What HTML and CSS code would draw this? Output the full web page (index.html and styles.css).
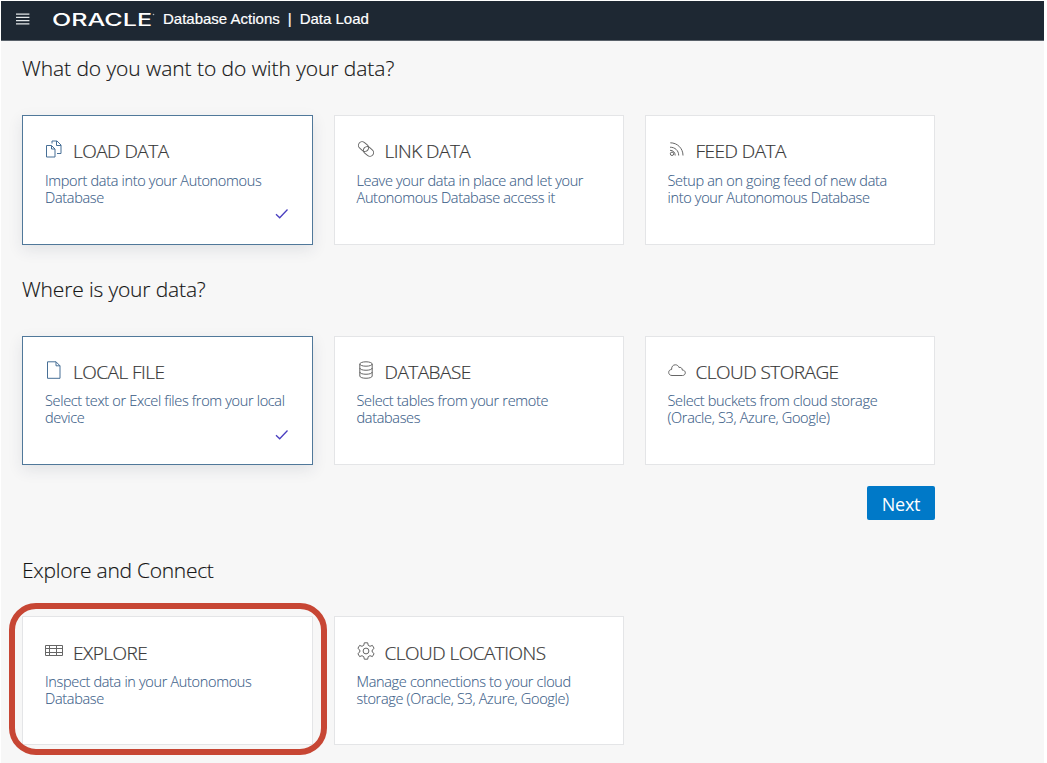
FILE: index.html
```html
<!DOCTYPE html>
<html lang="en">
<head>
<meta charset="utf-8">
<title>Database Actions | Data Load</title>
<link rel="stylesheet" href="styles.css">
</head>
<body>
<div class="page">
  <header class="topbar">
    <svg class="menu" width="14" height="12" viewBox="0 0 14 12"><path d="M0 1.200h13.400M0 4.400h13.400M0 7.600h13.400M0 10.800h13.400" stroke="#e4e8ea" stroke-width="1.300"/></svg>
    <svg class="logo" width="106" height="26" viewBox="0 0 106 26"><text class="logo-text" x="-1" y="20" textLength="100" lengthAdjust="spacingAndGlyphs">ORACLE</text><circle cx="100.500" cy="8.500" r=".8" fill="#aab2b8"/></svg>
    <span class="product">Database Actions</span><span class="bar">|</span><span class="section">Data Load</span>
  </header>
  <main class="content">
    <h2 class="question q1">What do you want to do with your data?</h2>
    <div class="cards first">
      <article class="card selected">
        <div class="head"><svg class="icon blue" viewBox="0 0 18 18"><path d="M1.500 5.500h5l3.500 3.500v8h-8.500zM6.500 5.500v3.500h3.500M7 3.500v-2.500h5l4 4v8.500h-4M11.500 1v4.500h4.500"/></svg><h3>LOAD DATA</h3></div>
        <p>Import data into your Autonomous<br>Database</p>
        <svg class="check" viewBox="0 0 14 12"><path d="M1 6.200l3.700 3.600L12.500 1.500"/></svg>
      </article>
      <article class="card">
        <div class="head"><svg class="icon" viewBox="0 0 18 18"><g transform="rotate(40 9 9)"><rect x="0" y="5" width="11" height="7.400" rx="3.700"/><rect x="7" y="5.600" width="11" height="7.400" rx="3.700"/></g></svg><h3>LINK DATA</h3></div>
        <p>Leave your data in place and let your<br>Autonomous Database access it</p>
      </article>
      <article class="card">
        <div class="head"><svg class="icon" viewBox="0 0 18 18"><circle cx="4" cy="13.800" r="1.700"/><path d="M2 7.200c5 0 8.700 3.300 8.700 8.300M2.300 2.800c7 0 12.700 5.500 12.700 12.700M2 10.300c3 0 5.200 2 5.200 5.200"/></svg><h3>FEED DATA</h3></div>
        <p>Setup an on going feed of new data<br>into your Autonomous Database</p>
      </article>
    </div>
    <h2 class="question q2">Where is your data?</h2>
    <div class="cards">
      <article class="card selected">
        <div class="head"><svg class="icon blue" viewBox="0 0 18 18"><path d="M2.500.8h8.500l4 4v12.500h-12.500zM11 .8v4h4"/></svg><h3>LOCAL FILE</h3></div>
        <p>Select text or Excel files from your local<br>device</p>
        <svg class="check" viewBox="0 0 14 12"><path d="M1 6.200l3.700 3.600L12.500 1.500"/></svg>
      </article>
      <article class="card">
        <div class="head"><svg class="icon" viewBox="0 0 18 18"><ellipse cx="9" cy="3" rx="6.200" ry="2.200"/><path d="M2.800 3v12c0 3 12.400 3 12.400 0V3M2.800 7c0 3 12.400 3 12.400 0M2.800 11c0 3 12.400 3 12.400 0"/></svg><h3>DATABASE</h3></div>
        <p>Select tables from your remote<br>databases</p>
      </article>
      <article class="card">
        <div class="head"><svg class="icon" viewBox="0 0 18 18"><path d="M4 14.500C1.800 14.500.7 13 .7 11.400c0-1.700 1.200-2.800 2.900-2.900C3.400 5.800 5 3.800 7.300 3.800c2 0 3.100 1.100 3.600 2.600 1.800-.5 3.500.8 3.400 2.700 1.900 0 3 1.200 3 2.700s-1.200 2.700-2.800 2.700z"/></svg><h3>CLOUD STORAGE</h3></div>
        <p>Select buckets from cloud storage<br>(Oracle, S3, Azure, Google)</p>
      </article>
    </div>
    <div class="actions"><button class="next">Next</button></div>
    <h2 class="question q3">Explore and Connect</h2>
    <div class="cards last">
      <article class="card highlighted">
        <div class="head"><svg class="icon" viewBox="0 0 18 18"><path d="M.5 3.500h17v10h-17zM.5 6.500h17M.5 10.500h17M4.500 3.500v10M11.500 3.500v10"/></svg><h3>EXPLORE</h3></div>
        <p>Inspect data in your Autonomous<br>Database</p>
      </article>
      <article class="card">
        <div class="head"><svg class="icon" viewBox="0 0 18 18"><path d="M7.300.8h3.400l.5 2.500 1.800 1 2.400-.9 1.700 3-1.900 1.600v2l1.900 1.600-1.700 3-2.400-.9-1.800 1-.5 2.500H7.300l-.5-2.500-1.800-1-2.400.9-1.700-3 1.900-1.600V8L.9 6.400l1.700-3 2.400.9 1.800-1z"/><circle cx="9" cy="9" r="2.900"/></svg><h3>CLOUD LOCATIONS</h3></div>
        <p>Manage connections to your cloud<br>storage (Oracle, S3, Azure, Google)</p>
      </article>
    </div>
  </main>
</div>
</body>
</html>
```
FILE: styles.css
```css
* { box-sizing: border-box; }
body { margin: 0; padding: 1px 3px 0 1px; height: 763px; overflow: hidden; background: #fff; font-family: "Open Sans", "Noto Sans", sans-serif; }
.page { height: 762px; background: #f7f7f7; }
.topbar { display: flex; align-items: center; height: 40px; padding: 0 0 3px 15px; background: #1e2833; border-bottom: 1px solid #59616a; color: #fff; font: 15px/20px "Liberation Sans", Arial, sans-serif; -webkit-text-stroke: .2px #fff; }
.logo { margin-left: 23px; }
.logo-text { font: 500 17px Inter, sans-serif; fill: #fff; }
.product { margin-left: 4px; }
.bar { margin-left: 8px; }
.section { margin-left: 8px; }
.content { width: 934px; padding-left: 21px; }
.question { margin: 0; height: 30px; font-size: 21px; line-height: 30px; font-weight: 300; color: #111; white-space: nowrap; -webkit-text-stroke: .15px #222; }
.q1 { margin: 12px 0 32px; letter-spacing: -.06px; }
.q2 { margin: 29px 0 32px; letter-spacing: -.15px; }
.q3 { margin: 35px 0 31px; letter-spacing: -.28px; }
.cards { display: grid; grid-template-columns: 291px 290px 290px; grid-auto-rows: 129px; gap: 21px; }
.cards.first { grid-auto-rows: 130px; }
.card { position: relative; padding: 22px 0 0 22px; background: #fff; border: 1px solid #e4e5e7; white-space: nowrap; }
.card + .card { padding-left: 21.5px; }
.last .card { padding-top: 23px; }
.card.selected { border-color: #50789a; box-shadow: 0 5px 14px rgba(40, 50, 80, .10); }
.highlighted::after { content: ""; position: absolute; inset: -14px -15px -11px -14px; border: 6px solid #c74634; border-radius: 27px; }
.head { display: flex; align-items: center; height: 26px; }
.icon { width: 18px; height: 18px; margin: -5px 10px 0 0; fill: none; stroke: #666; stroke-width: 1; }
.icon.blue { stroke: #476f96; }
h3 { margin: 0; font-size: 19px; line-height: 26px; font-weight: 300; letter-spacing: -.52px; color: #333; -webkit-text-stroke: .2px #444; }
.card p { margin: 7px 0 0; font-size: 14.5px; line-height: 17px; font-weight: 300; letter-spacing: -.33px; color: #3c6088; -webkit-text-stroke: .1px #3c6088; }
.first .card p { margin-top: 7.5px; }
.check { position: absolute; right: 23px; bottom: 23px; width: 14px; height: 12px; fill: none; stroke: #4a3fc0; stroke-width: 1.3; }
.first .check { bottom: 24px; }
.actions { display: flex; justify-content: flex-end; padding-top: 21px; }
.next { width: 68px; height: 34px; padding: 1px 0 0; border: 0; border-radius: 2px; background: #0079c8; color: #fff; font: 18px/30px "Open Sans", sans-serif; letter-spacing: -.3px; }
```
